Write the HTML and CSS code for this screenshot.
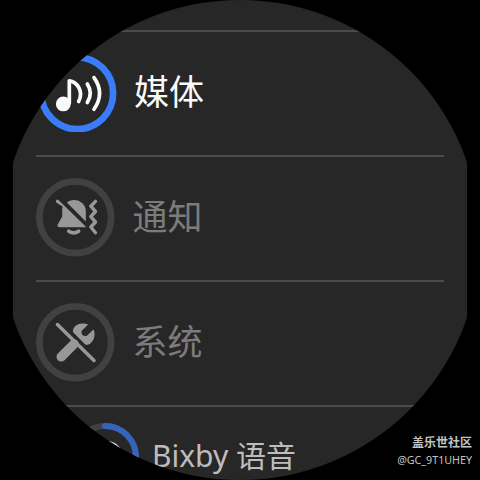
FILE: index.html
```
<!DOCTYPE html>
<html lang="zh-CN">
<head>
<meta charset="utf-8">
<title>音量</title>
<link rel="stylesheet" href="styles.css">
</head>
<body>
<div class="watch">
  <main class="screen">
    <ul class="list">
      <li class="row row-media">
        <svg class="dial" viewBox="0 0 78.5 78.5">
          <circle class="ring ring-full" cx="39.25" cy="39.25" r="35.9"/>
          <circle class="fill-white" cx="25.3" cy="49.9" r="7.4"/>
          <path class="stroke-white note" d="M31.3 49V26.8C38.5 27.4 46.3 37.2 40.6 47.5"/>
          <path class="stroke-white wave" d="M49.3 30Q55.3 39.2 49.3 48.5"/>
          <path class="stroke-white wave" d="M56 23.6Q67.2 39.2 56 55.2"/>
        </svg>
        <span class="label">媒体</span>
      </li>
      <li class="row muted">
        <svg class="dial" viewBox="0 0 78.5 78.5">
          <circle class="ring" cx="39.25" cy="39.25" r="35.9"/>
          <path class="fill-grey" d="M20.2 22.2Q21.5 21 22.8 22.2L50.4 49.3H23.5Q20.2 48.5 22 46L26.2 38.4V31.8Q26.2 29.5 26.8 28.8L20.2 24.5Q19.3 23.3 20.2 22.2Z"/>
          <path class="fill-grey" d="M30.8 24.5Q33.2 22.2 37.5 22C44.5 21.8 49.8 26.8 49.8 33.3V43.4Z"/>
          <path class="stroke-grey clapper" d="M32.8 53.2Q37.7 56.7 42.6 53.2"/>
          <path class="stroke-grey zigzag" d="M59.5 23.4L54.8 28.2L59.5 33.5L54.8 38.7L59.5 44L54.8 49L59.5 54.8"/>
        </svg>
        <span class="label">通知</span>
      </li>
      <li class="row muted">
        <svg class="dial" viewBox="0 0 78.5 78.5">
          <circle class="ring" cx="39.25" cy="39.25" r="35.9"/>
          <path class="stroke-grey handle" d="M25.2 53.8L38 41"/>
          <path class="stroke-grey slash" d="M21.4 21.5L58 57.5"/>
          <path class="fill-grey" d="M37.1 29.3C36 25 40.5 20.4 46 20.4C48.5 20.4 51 20.8 52.2 21.6L45.8 27.8Q44.8 29.4 46.2 31.7Q48.8 33.8 51.2 32.4L57.4 26.6C58.6 27.8 59 32 58.1 34.8C56.5 39.8 52.4 43 49.2 41.4Z"/>
        </svg>
        <span class="label">系统</span>
      </li>
      <li class="row row-bixby">
        <svg class="dial dial-small" viewBox="0 0 68 68">
          <circle class="ring" cx="34" cy="34" r="31"/>
          <path class="ring ring-value" d="M34 3A31 31 0 0 1 65 34"/>
          <circle class="stroke-white bixby" cx="36" cy="34" r="14.4"/>
        </svg>
        <span class="label">Bixby 语音</span>
      </li>
    </ul>
  </main>
  <footer class="credit">
    <strong class="community">盖乐世社区</strong>
    <span class="author">@GC_9T1UHEY</span>
  </footer>
</div>
</body>
</html>
```
FILE: styles.css
```
* { box-sizing: border-box; }
body {
  margin: 0;
  background: #000;
  font-family: "Noto Sans", "Noto Sans CJK SC", sans-serif;
}
.watch {
  position: relative;
  width: 480px;
  height: 480px;
  overflow: hidden;
}
.screen {
  height: 480px;
  padding: 30px 36px 0;
  background: linear-gradient(#272727, #272727) 13px 0 / 454px 480px no-repeat;
  clip-path: circle(240px at 240px 240px);
}
.list {
  width: 408px;
  margin: 0;
  padding: 0;
  list-style: none;
}
.row {
  display: flex;
  align-items: center;
  height: 125px;
  padding-bottom: 2px;
  border-top: 2px solid #4b4b4b;
}
.dial {
  flex: none;
  width: 78.5px;
  height: 78.5px;
}
.label {
  margin: 0 0 1px 18px;
  font-size: 35px;
  line-height: 50px;
  color: #fafafa;
  white-space: pre;
}
.row-media { padding: 0 0 1px 2px; }
.row-media .label { margin-left: 17.5px; margin-bottom: 2px; }
.muted .label { color: #7c7c7c; }
.row-bixby {
  align-items: flex-start;
  padding: 16px 0 0 34.5px;
}
.row-bixby .label {
  margin: 8px 0 0 13.5px;
  font-size: 30px;
  color: #bdbdbd;
}
.dial-small { width: 68px; height: 68px; }
.ring { fill: none; stroke: #414141; stroke-width: 6.7; }
.ring-full { stroke: #3b7cfb; }
.dial-small .ring { stroke-width: 6; }
.dial-small .ring-value { stroke: #3564bf; stroke-linecap: round; }
.fill-white { fill: #fafafa; }
.fill-grey { fill: #989898; }
.stroke-white, .stroke-grey { fill: none; stroke-linecap: round; stroke-linejoin: round; }
.stroke-white { stroke: #fafafa; }
.stroke-grey { stroke: #989898; }
.note, .wave { stroke-width: 3.7; }
.dial-small .bixby { stroke: #ccc; stroke-width: 3; }
.clapper { stroke-width: 3.7; }
.zigzag { stroke-width: 3.4; }
.slash { stroke-width: 3.5; }
.handle { stroke-width: 9.5; }
.credit {
  position: absolute;
  right: 8px;
  bottom: 11px;
  display: flex;
  flex-direction: column;
  align-items: flex-end;
  color: #c4c4c4;
}
.community { font-size: 12px; line-height: 16px; }
.author { font-size: 10.7px; line-height: 18px; }
```
